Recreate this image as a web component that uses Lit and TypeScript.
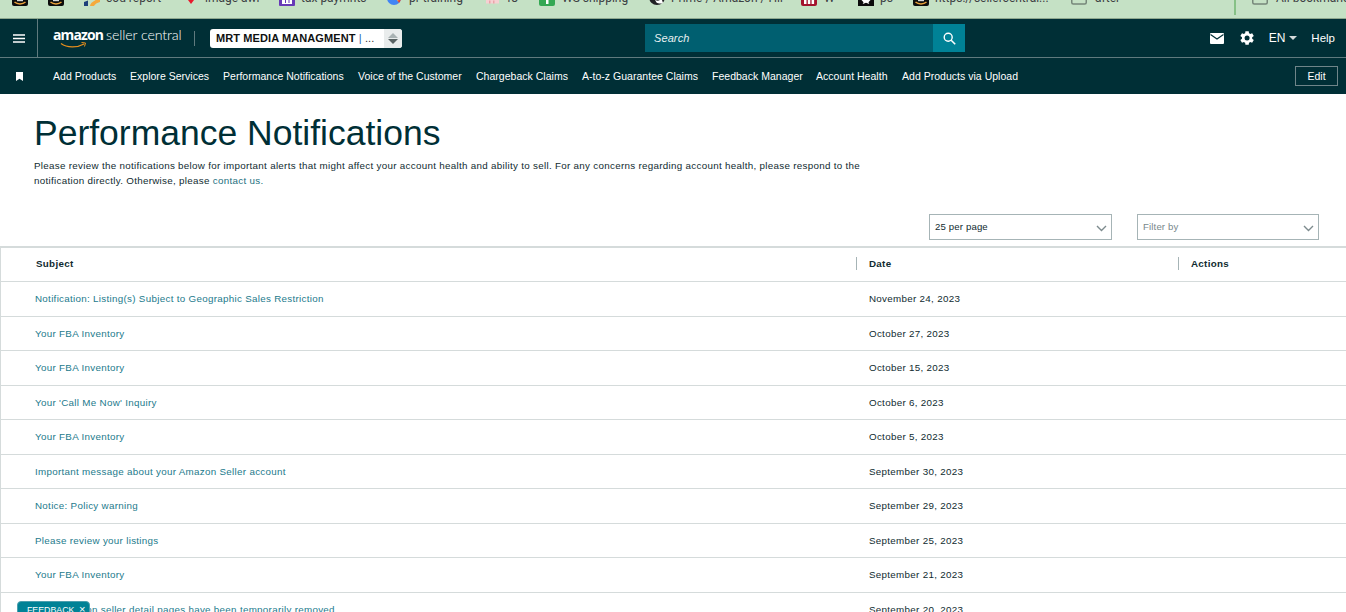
import { LitElement, html, css, svg } from "lit";
import { customElement } from "lit/decorators.js";

const amazonIcon = svg`<rect width="16" height="16" rx="2" fill="#0d0d0d"/><path d="M5 10.500h6" stroke="#d8d8d8" stroke-width="1.400"/><path d="M2.500 12c3 2.600 8 2.600 11 0" stroke="#e9a13b" stroke-width="1.500" fill="none"/>`;
const icons: Record<string, unknown> = {
  amazon: amazonIcon,
  cod: svg`<path d="M0 16v-4l4-1.500V16z" fill="#1d3f7a"/><path d="M6 16c0-3 4-5.500 10-8v4c-3 .8-5 2-6 4z" fill="#f5a93b"/>`,
  pin: svg`<path d="M8 14L5 10h6z" fill="#e8192c"/>`,
  purple: svg`<rect width="16" height="16" rx="1" fill="#673ab7"/><rect x="3" y="8" width="10" height="6" fill="#fff"/><rect x="6" y="8" width="1" height="5" fill="#673ab7"/><rect x="9.500" y="8" width="1" height="5" fill="#673ab7"/>`,
  gcircle: svg`<path d="M0 8a7 7 0 0 0 14 0z" fill="#4285f4"/><path d="M9 8h5a7 7 0 0 1-2 5z" fill="#ea4335"/><path d="M9 8h3l-1 3.500z" fill="#f6c343"/>`,
  pink: svg`<rect x="1" y="10" width="13" height="3.500" fill="#f6d0d2"/><rect x="4" y="10.500" width="1.500" height="3" fill="#e9a5aa"/><rect x="8" y="10.500" width="1.500" height="3" fill="#e9a5aa"/>`,
  green: svg`<rect width="16" height="16" rx="2" fill="#34a853"/><rect x="7" y="6" width="2.500" height="8" fill="#fff"/>`,
  blackc: svg`<circle cx="8" cy="7" r="8" fill="#202124"/><path d="M6 10c3 1.500 5 .5 6.500-1.500L14 13c-2 1-5 .5-6.500-.5z" fill="#fff"/>`,
  crimson: svg`<rect width="16" height="16" rx="2" fill="#a3122d"/><rect x="3" y="6" width="2.500" height="8" fill="#fff"/><rect x="6.800" y="6" width="2.500" height="8" fill="#fff"/><rect x="10.600" y="6" width="2.500" height="8" fill="#fff"/>`,
  blacks: svg`<rect width="16" height="16" fill="#0c0c0c"/><path d="M3.500 10h9l-2 2.200.8 1.800-3.300-1.300L4.700 14l.8-1.800z" fill="#fff"/>`,
  folder: svg`<rect x=".75" y="4" width="14.500" height="10" rx="1.500" fill="none" stroke="#76877a" stroke-width="1.500"/>`,
};

const marks = [
  { icon: "amazon", label: "", w: 36, g: 6 },
  { icon: "amazon", label: "", w: 36, g: 6 },
  { icon: "cod", label: "cod report", w: 99, g: 6 },
  { icon: "pin", label: "image awl", w: 96, g: 6 },
  { icon: "purple", label: "tax paymnts", w: 108, g: 6 },
  { icon: "gcircle", label: "pr training", w: 98, g: 6 },
  { icon: "pink", label: "f8", w: 54, g: 6 },
  { icon: "green", label: "WS shipping", w: 110, g: 7 },
  { icon: "blackc", label: "Prime / Amazon / Hir", w: 152, g: 6 },
  { icon: "crimson", label: "W", w: 57, g: 7 },
  { icon: "blacks", label: "ps", w: 55, g: 6 },
  { icon: "amazon", label: "https://sellercentral...", w: 158, g: 6 },
  { icon: "folder", label: "after", w: 163, g: 8 },
];

const navLinks: [string, number][] = [
  ["Add Products", 53], ["Explore Services", 130], ["Performance Notifications", 223],
  ["Voice of the Customer", 358], ["Chargeback Claims", 476], ["A-to-z Guarantee Claims", 582],
  ["Feedback Manager", 712], ["Account Health", 816], ["Add Products via Upload", 902],
];

const rows = [
  ["Notification: Listing(s) Subject to Geographic Sales Restriction", "November 24, 2023"],
  ["Your FBA Inventory", "October 27, 2023"],
  ["Your FBA Inventory", "October 15, 2023"],
  ["Your 'Call Me Now' Inquiry", "October 6, 2023"],
  ["Your FBA Inventory", "October 5, 2023"],
  ["Important message about your Amazon Seller account", "September 30, 2023"],
  ["Notice: Policy warning", "September 29, 2023"],
  ["Please review your listings", "September 25, 2023"],
  ["Your FBA Inventory", "September 21, 2023"],
  ["Your listing on seller detail pages have been temporarily removed", "September 20, 2023"],
];

const chevron = html`<svg class="chev" width="11" height="7" viewBox="0 0 11 7"><path d="M1 1l4.500 4.500L10 1" fill="none" stroke="#7d8b8e" stroke-width="1.400"/></svg>`;

@customElement("app-root")
export class AppRoot extends LitElement {
  static styles = css`
    :host { display: block; width: 1346px; height: 612px; overflow: hidden; position: relative; background: #fff; font-family: "Liberation Sans", Arial, sans-serif; color: #002f36; }
    a { text-decoration: none; color: inherit; }

    .markswrap { height: 18px; background: #c5e1c5; border-bottom: 1px solid #8fa88f; overflow: hidden; }
    .marks { display: flex; align-items: flex-end; padding-left: 12px; height: 6px; }
    .mark { flex: none; display: flex; align-items: flex-end; height: 6px; white-space: nowrap; }
    .mark svg { flex: none; display: block; }
    .mark span { font: 12px/14px Roboto, sans-serif; color: #3c4043; margin-bottom: 1px; }
    .divider { flex: none; width: 2px; height: 15px; background: #86c186; align-self: flex-start; margin-right: 16px; }

    .top { height: 38px; background: #002f36; border-bottom: 1px solid #5f7a7e; display: flex; align-items: center; position: relative; }
    .burger { width: 37px; height: 38px; border-right: 1px solid #5f7a7e; display: flex; align-items: center; justify-content: center; flex: none; }
    .logo { margin: 2px 0 0 15px; width: 141px; flex: none; height: 26px; display: flex; flex-direction: column; color: #fff; }
    .logotext { display: flex; align-items: baseline; gap: 3px; line-height: 17px; white-space: nowrap; }
    .logotext b { font: 700 14px/17px "Open Sans", sans-serif; letter-spacing: -0.9px; }
    .logotext span { font: 300 14.2px/17px Lato, sans-serif; letter-spacing: -0.1px; }
    .smile { display: block; margin: -1px 0 0 7px; }
    .vsep { width: 1px; height: 15px; background: #5f7a7e; flex: none; }
    .store { margin-left: 15px; width: 192px; height: 19px; background: #fff; border-radius: 3px; display: flex; flex: none; overflow: hidden; }
    .store .name { flex: 1; color: #0f1111; font-size: 11px; font-weight: 700; line-height: 19px; padding-left: 6px; white-space: nowrap; letter-spacing: 0.1px; }
    .store .name i { font-style: normal; font-weight: 400; color: #2468b3; }
    .store .name em { font-style: normal; font-weight: 400; color: #333; }
    .store .spin { width: 18px; background: #e9ecec; display: flex; flex-direction: column; align-items: center; justify-content: center; gap: 1px; }
    .search { margin-left: 243px; display: flex; height: 28px; width: 320px; flex: none; }
    .search .field { flex: 1; background: #005f70; color: #e8f1f2; font-size: 11px; font-style: italic; line-height: 28px; padding-left: 9px; letter-spacing: 0.1px; }
    .search .btn { width: 32px; background: #008296; display: flex; align-items: center; justify-content: center; }
    .right { margin-left: auto; display: flex; align-items: center; color: #fff; font-size: 11px; }
    .mail { margin-right: 16px; display: block; }
    .gear { margin-right: 15px; display: block; }
    .lang { display: flex; align-items: center; gap: 4px; font-size: 12px; margin-right: 14px; }
    .help { margin-right: 11px; font-size: 11.5px; }

    .sub { height: 36px; background: #002f36; display: flex; align-items: center; color: #fff; }
    .bm { width: 53px; flex: none; display: flex; padding-left: 16px; box-sizing: border-box; }
    .links { display: flex; flex: 1; }
    .links a { font-size: 10.5px; line-height: 36px; white-space: nowrap; letter-spacing: 0.02px; flex: none; }
    .edit { margin-right: 8px; width: 43px; height: 20px; box-sizing: border-box; border: 1px solid #6f8589; font-size: 10.5px; line-height: 18px; text-align: center; color: #fff; flex: none; }

    .head { padding: 18px 0 0 34px; }
    h1 { margin: 0; font-size: 35.5px; line-height: 42px; font-weight: 400; color: #002f36; }
    .head p { margin: 4px 0 0; width: 840px; font-size: 9.8px; line-height: 15px; color: #0f2b30; letter-spacing: 0.3px; }
    .head p a { color: #1c6f80; }

    .controls { display: flex; justify-content: flex-end; gap: 25px; padding-right: 27px; margin-top: 26px; }
    .sel { box-sizing: border-box; height: 26px; border: 1px solid #a6b4b6; display: flex; align-items: center; justify-content: space-between; padding: 0 4px 1px 5px; font-size: 9.6px; letter-spacing: 0.15px; color: #0f2b30; }
    .sel.a { width: 183px; }
    .sel.b { width: 182px; color: #77888b; }
    .chev { margin-top: 3px; }

    .table { margin-top: 6px; border-top: 2px solid #d5dbdb; border-left: 1px solid #d5dbdb; }
    .row { display: grid; grid-template-columns: 855px 322px 1fr; height: 34.5px; padding-bottom: 0.5px; border-bottom: 1px solid #d5dbdb; box-sizing: border-box; align-items: center; font-size: 9.8px; letter-spacing: 0.3px; }
    .row.h { height: 34px; padding-bottom: 2px; font-weight: 700; color: #0f2b30; }
    .row .c { padding-left: 34px; white-space: nowrap; }
    .row .d { padding-left: 13px; color: #0f2b30; }
    .row .s { color: #1c7a8c; }
    .row:last-child .s { padding-left: 31px; }
    .row.h .s { color: #0f2b30; padding-left: 35px; }
    .row.h .d, .row.h .e { padding-left: 12px; border-left: 1px solid #a6b4b6; line-height: 13px; }
    .feedback { position: absolute; left: 17px; top: 601px; width: 73px; height: 24px; box-sizing: border-box; background: #008296; border: 1px solid #4c9fae; border-radius: 4px 4px 0 0; color: #fff; font-size: 8.8px; line-height: 14px; padding-left: 9px; white-space: nowrap; }
    .feedback span { font-size: 11px; margin-left: 2px; }
  `;

  render() {
    return html`
      <div class="markswrap">
        <div class="marks">
          ${marks.map(m => html`<div class="mark" style="width:${m.w}px;gap:${m.g}px"><svg width="16" height="16" viewBox="0 0 16 16">${icons[m.icon]}</svg>${m.label ? html`<span>${m.label}</span>` : ""}</div>`)}
          <div class="divider"></div>
          <div class="mark" style="gap:8px"><svg width="16" height="16" viewBox="0 0 16 16">${icons.folder}</svg><span>All bookmarks</span></div>
        </div>
      </div>

      <div class="top">
        <div class="burger"><svg width="12" height="9" viewBox="0 0 12 9"><path d="M0 1h12M0 4.500h12M0 8h12" stroke="#fff" stroke-width="1.400"/></svg></div>
        <div class="logo">
          <div class="logotext"><b>amazon</b><span>seller central</span></div>
          <svg class="smile" width="28" height="7" viewBox="0 0 28 7"><path d="M1 1.500c6 4.500 16 4.500 23 .5" fill="none" stroke="#e88f1d" stroke-width="1.300"/><path d="M21.500 0.500l4 .5-1 3.500" fill="none" stroke="#e88f1d" stroke-width="1"/></svg>
        </div>
        <div class="vsep"></div>
        <div class="store">
          <div class="name">MRT MEDIA MANAGMENT <i>|</i> <em>...</em></div>
          <div class="spin">
            <svg width="10" height="5" viewBox="0 0 10 5"><path d="M5 0l5 5H0z" fill="#a9b2b3"/></svg>
            <svg width="10" height="5" viewBox="0 0 10 5"><path d="M5 5L0 0h10z" fill="#5a6364"/></svg>
          </div>
        </div>
        <div class="search">
          <div class="field">Search</div>
          <div class="btn"><svg width="13" height="13" viewBox="0 0 13 13"><circle cx="5.200" cy="5.200" r="4" fill="none" stroke="#fff" stroke-width="1.400"/><path d="M8.200 8.200l4 4" stroke="#fff" stroke-width="1.600"/></svg></div>
        </div>
        <div class="right">
          <svg class="mail" width="14" height="11" viewBox="0 0 14 11"><rect width="14" height="11" rx="1" fill="#fff"/><path d="M0.500 1.500L7 6l6.500-4.500" fill="none" stroke="#002f36" stroke-width="1.200"/></svg>
          <svg class="gear" width="14" height="14" viewBox="2.400 2.400 19.600 19.200"><path fill="#fff" fill-rule="evenodd" d="M19.400 13a7.500 7.500 0 0 0 0-2l2.300-1.800-2.300-4-2.700 1.100a7.600 7.600 0 0 0-1.700-1L14.600 2.500h-4.600L9.600 5.300a7.600 7.600 0 0 0-1.700 1L5.200 5.200l-2.300 4L5.200 11a7.500 7.500 0 0 0 0 2l-2.300 1.800 2.300 4 2.700-1.100a7.600 7.600 0 0 0 1.700 1l.4 2.800h4.600l.4-2.800a7.600 7.600 0 0 0 1.700-1l2.700 1.100 2.300-4zM12.300 15.500a3.500 3.500 0 1 1 0-7 3.500 3.500 0 0 1 0 7z"/></svg>
          <div class="lang">EN <svg width="8" height="4" viewBox="0 0 8 4"><path d="M0 0h8L4 4z" fill="#d5dbdb"/></svg></div>
          <div class="help">Help</div>
        </div>
      </div>

      <div class="sub">
        <div class="bm"><svg width="7" height="9" viewBox="0 0 7 9"><path d="M0 0h7v9L3.500 6.800 0 9z" fill="#fff"/></svg></div>
        <div class="links">
          ${navLinks.map(([t, x], i) => {
            const next = navLinks[i + 1];
            return html`<a style="width:${next ? next[1] - x : 150}px">${t}</a>`;
          })}
        </div>
        <div class="edit">Edit</div>
      </div>

      <div class="head">
        <h1>Performance Notifications</h1>
        <p>Please review the notifications below for important alerts that might affect your account health and ability to sell. For any concerns regarding account health, please respond to the notification directly. Otherwise, please <a>contact us.</a></p>
      </div>

      <div class="controls">
        <div class="sel a">25 per page ${chevron}</div>
        <div class="sel b">Filter by ${chevron}</div>
      </div>

      <div class="table">
        <div class="row h"><div class="c s">Subject</div><div class="d">Date</div><div class="e">Actions</div></div>
        ${rows.map(r => html`<div class="row"><div class="c s">${r[0]}</div><div class="d">${r[1]}</div><div></div></div>`)}
      </div>

      <div class="feedback">FEEDBACK <span>×</span></div>
    `;
  }
}
